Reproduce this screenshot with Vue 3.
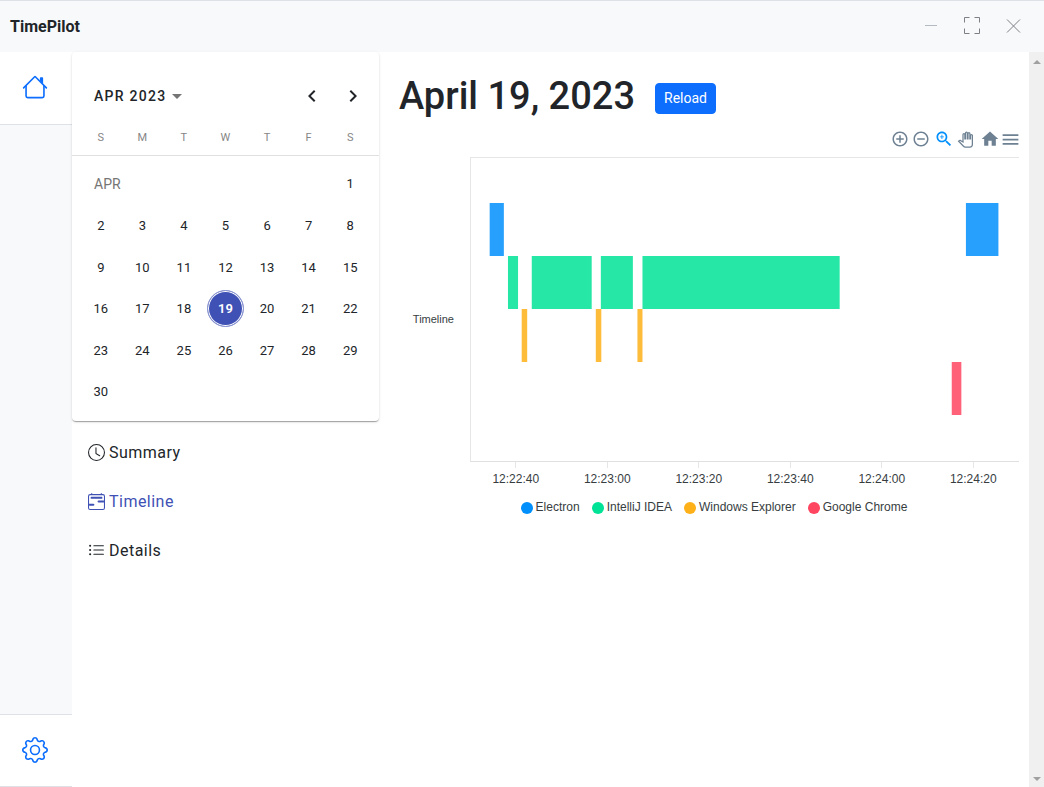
<template>
  <div class="window">
    <header class="titlebar">
      <span class="title">TimePilot</span>
      <div class="window-controls">
        <button type="button" class="minimize" aria-label="Minimize">
          <svg width="20" height="20" viewBox="0 0 20 20"><path d="M4 10.5h12" /></svg>
        </button>
        <button type="button" aria-label="Maximize">
          <svg width="20" height="20" viewBox="0 0 20 20">
            <path d="M2.5 7.500V2.500H7.500M12.500 2.500H17.500V7.500M17.500 13.500V18.500H12.500M7.500 18.500H2.500V13.500" />
          </svg>
        </button>
        <button type="button" aria-label="Close">
          <svg width="20" height="20" viewBox="0 0 20 20"><path d="M4 4.500l13 13M17 4.500l-13 13" /></svg>
        </button>
      </div>
    </header>

    <div class="body">
      <nav class="rail" aria-label="Main">
        <a href="#home" class="rail-item home" aria-label="Home">
          <svg width="26" height="26" viewBox="0 0 16 16">
            <path v-for="d in icons.house" :key="d" fill-rule="evenodd" :d="d" />
          </svg>
        </a>
        <a href="#settings" class="rail-item settings" aria-label="Settings">
          <svg width="26" height="26" viewBox="0 0 16 16">
            <path v-for="d in icons.gear" :key="d" :d="d" />
          </svg>
        </a>
      </nav>

      <aside class="side">
        <section class="calendar">
          <div class="calendar-header">
            <button type="button" class="period">
              APR 2023
              <svg width="10" height="5" viewBox="0 0 10 5"><path d="M0 0l5 5 5-5z" /></svg>
            </button>
            <div class="arrows">
              <button type="button" aria-label="Previous month">
                <svg width="24" height="24" viewBox="0 0 24 24"><path d="M15.410 7.410L14 6l-6 6 6 6 1.410-1.410L10.830 12z" /></svg>
              </button>
              <button type="button" aria-label="Next month">
                <svg width="24" height="24" viewBox="0 0 24 24"><path d="M10 6L8.590 7.410 13.170 12l-4.580 4.590L10 18l6-6z" /></svg>
              </button>
            </div>
          </div>
          <table>
            <thead>
              <tr>
                <th v-for="(day, idx) in weekDays" :key="idx" scope="col">{{ day }}</th>
              </tr>
              <tr aria-hidden="true">
                <th class="divider" colspan="7"></th>
              </tr>
            </thead>
            <tbody>
              <tr v-for="(week, idx) in weeks" :key="idx">
                <td v-if="idx === 0" class="month-label" :colspan="firstDay">APR</td>
                <td v-for="day in week" :key="day">
                  <button type="button" class="day" :class="{ selected: day === selected }" @click="selected = day">
                    <span>{{ day }}</span>
                  </button>
                </td>
              </tr>
            </tbody>
          </table>
        </section>

        <nav class="views" aria-label="Views">
          <a
            v-for="view in views"
            :key="view.name"
            :href="'#' + view.name.toLowerCase()"
            :class="{ active: view.name === 'Timeline' }"
          >
            <svg width="17" height="17" viewBox="0 0 16 16">
              <path v-for="d in view.icon" :key="d" fill-rule="evenodd" :d="d" />
            </svg>
            {{ view.name }}
          </a>
        </nav>
      </aside>

      <main class="content">
        <div class="heading">
          <h1>April {{ selected }}, 2023</h1>
          <button type="button" class="reload">Reload</button>
        </div>

        <div class="toolbar">
          <button v-for="tool in tools" :key="tool.id" type="button" :class="tool.id" :aria-label="tool.label">
            <svg :width="tool.size" :height="tool.size" viewBox="0 0 24 24"><path :d="tool.path" /></svg>
          </button>
        </div>

        <div class="chart">
          <svg class="plot" width="100%" height="336" role="img" aria-label="Timeline">
            <g class="grid">
              <line x1="0" y1="0" x2="100%" y2="0" />
              <line x1="0" y1="0" x2="0" y2="304" />
              <line class="axis" x1="0" y1="304" x2="100%" y2="304" />
            </g>
            <text class="row-label" x="-16" y="166" text-anchor="end">Timeline</text>
            <g v-for="(app, lane) in apps" :key="app.name" :fill="app.color">
              <rect
                v-for="(bar, idx) in app.bars"
                :key="idx"
                :x="percent(bar[0])"
                :y="46 + lane * 53"
                :width="percent(bar[1] - bar[0])"
                height="53"
                fill-opacity="0.85"
              />
            </g>
            <g v-for="(tick, idx) in ticks" :key="tick">
              <line class="tick" :x1="percent(10 + idx * 20)" y1="305" :x2="percent(10 + idx * 20)" y2="311" />
              <text class="tick-label" :x="percent(10 + idx * 20)" y="326" text-anchor="middle">{{ tick }}</text>
            </g>
          </svg>
        </div>

        <ul class="legend">
          <li v-for="app in apps" :key="app.name">
            <svg width="12" height="12" viewBox="0 0 12 12"><circle cx="6" cy="6" r="6" :fill="app.color" /></svg>
            {{ app.name }}
          </li>
        </ul>
      </main>

      <div class="scrollbar" aria-hidden="true">
        <svg width="8" height="4" viewBox="0 0 8 4"><path d="M0 4l4-4 4 4z" /></svg>
        <svg width="8" height="4" viewBox="0 0 8 4"><path d="M0 0l4 4 4-4z" /></svg>
      </div>
    </div>
  </div>
</template>

<script setup>
import { ref } from 'vue';

const selected = ref(19);

const weekDays = ['S', 'M', 'T', 'W', 'T', 'F', 'S'];
const firstDay = 6;
const daysInMonth = 30;

const weeks = [[]];
for (let day = 1; day <= daysInMonth; day++) {
  weeks[weeks.length - 1].push(day);
  if ((firstDay + day) % 7 === 0) weeks.push([]);
}

// Visible range of the chart in seconds, starting at 12:22:30
const range = 120;
const ticks = ['12:22:40', '12:23:00', '12:23:20', '12:23:40', '12:24:00', '12:24:20'];

// Bars are [start, end] in seconds from the start of the range
const apps = [
  { name: 'Electron', color: '#008ffb', bars: [[4.3, 7.4], [108.4, 115.5]] },
  { name: 'IntelliJ IDEA', color: '#00e396', bars: [[8.3, 10.5], [13.5, 26.6], [28.6, 35.6], [37.7, 80.8]] },
  { name: 'Windows Explorer', color: '#feb019', bars: [[11.3, 12.5], [27.5, 28.7], [36.6, 37.7]] },
  { name: 'Google Chrome', color: '#ff4560', bars: [[105.3, 107.4]] },
];

function percent(seconds) {
  return (seconds / range) * 100 + '%';
}

const icons = {
  house: [
    'M2 13.5V7h1v6.5a.5.5 0 0 0 .5.5h9a.5.5 0 0 0 .5-.5V7h1v6.5a1.5 1.5 0 0 1-1.5 1.5h-9A1.5 1.5 0 0 1 2 13.5zm11-11V6l-2-2V2.5a.5.5 0 0 1 .5-.5h1a.5.5 0 0 1 .5.5z',
    'M7.293 1.5a1 1 0 0 1 1.414 0l6.647 6.646a.5.5 0 0 1-.708.708L8 2.207 1.354 8.854a.5.5 0 1 1-.708-.708L7.293 1.5z',
  ],
  gear: [
    'M8 4.754a3.246 3.246 0 1 0 0 6.492 3.246 3.246 0 0 0 0-6.492zM5.754 8a2.246 2.246 0 1 1 4.492 0 2.246 2.246 0 0 1-4.492 0z',
    'M9.796 1.343c-.527-1.79-3.065-1.79-3.592 0l-.094.319a.873.873 0 0 1-1.255.52l-.292-.16c-1.64-.892-3.433.902-2.54 2.541l.159.292a.873.873 0 0 1-.52 1.255l-.319.094c-1.79.527-1.79 3.065 0 3.592l.319.094a.873.873 0 0 1 .52 1.255l-.16.292c-.892 1.64.901 3.434 2.541 2.54l.292-.159a.873.873 0 0 1 1.255.52l.094.319c.527 1.79 3.065 1.79 3.592 0l.094-.319a.873.873 0 0 1 1.255-.52l.292.16c1.64.893 3.434-.902 2.54-2.541l-.159-.292a.873.873 0 0 1 .52-1.255l.319-.094c1.79-.527 1.79-3.065 0-3.592l-.319-.094a.873.873 0 0 1-.52-1.255l.16-.292c.893-1.64-.902-3.433-2.541-2.54l-.292.159a.873.873 0 0 1-1.255-.52l-.094-.319zm-2.633.283c.246-.835 1.428-.835 1.674 0l.094.319a1.873 1.873 0 0 0 2.693 1.115l.291-.16c.764-.415 1.6.42 1.184 1.185l-.159.292a1.873 1.873 0 0 0 1.116 2.692l.318.094c.835.246.835 1.428 0 1.674l-.319.094a1.873 1.873 0 0 0-1.115 2.693l.16.291c.415.764-.42 1.6-1.185 1.184l-.291-.159a1.873 1.873 0 0 0-2.693 1.116l-.094.318c-.246.835-1.428.835-1.674 0l-.094-.319a1.873 1.873 0 0 0-2.692-1.115l-.292.16c-.764.415-1.6-.42-1.184-1.185l.159-.291A1.873 1.873 0 0 0 1.945 8.93l-.319-.094c-.835-.246-.835-1.428 0-1.674l.319-.094A1.873 1.873 0 0 0 3.06 4.377l-.16-.292c-.415-.764.42-1.6 1.185-1.184l.292.159a1.873 1.873 0 0 0 2.692-1.115l.094-.319z',
  ],
};

const views = [
  {
    name: 'Summary',
    icon: [
      'M8 3.5a.5.5 0 0 0-1 0V9a.5.5 0 0 0 .252.434l3.5 2a.5.5 0 0 0 .496-.868L8 8.71V3.5z',
      'M8 16A8 8 0 1 0 8 0a8 8 0 0 0 0 16zm7-8A7 7 0 1 1 1 8a7 7 0 0 1 14 0z',
    ],
  },
  {
    name: 'Timeline',
    icon: [
      'M3.5 0a.5.5 0 0 1 .5.5V1h8V.5a.5.5 0 0 1 1 0V1h1a2 2 0 0 1 2 2v11a2 2 0 0 1-2 2H2a2 2 0 0 1-2-2V3a2 2 0 0 1 2-2h1V.5a.5.5 0 0 1 .5-.5zM2 2a1 1 0 0 0-1 1v11a1 1 0 0 0 1 1h12a1 1 0 0 0 1-1V3a1 1 0 0 0-1-1H2z',
      'M2.5 4a.5.5 0 0 1 .5-.5h10a.5.5 0 0 1 .5.5v1a.5.5 0 0 1-.5.5H3a.5.5 0 0 1-.5-.5V4zM9 8a1 1 0 0 1 1-1h5v2h-5a1 1 0 0 1-1-1zm-8 2h4a1 1 0 1 1 0 2H1v-2z',
    ],
  },
  {
    name: 'Details',
    icon: [
      'M5 11.5a.5.5 0 0 1 .5-.5h9a.5.5 0 0 1 0 1h-9a.5.5 0 0 1-.5-.5zm0-4a.5.5 0 0 1 .5-.5h9a.5.5 0 0 1 0 1h-9a.5.5 0 0 1-.5-.5zm0-4a.5.5 0 0 1 .5-.5h9a.5.5 0 0 1 0 1h-9a.5.5 0 0 1-.5-.5z',
      'M2 4.500a1 1 0 1 0 0-2 1 1 0 0 0 0 2zm0 4a1 1 0 1 0 0-2 1 1 0 0 0 0 2zm0 4a1 1 0 1 0 0-2 1 1 0 0 0 0 2z',
    ],
  },
];

const tools = [
  { id: 'zoom-in', label: 'Zoom in', size: 18, path: 'M13 7h-2v4H7v2h4v4h2v-4h4v-2h-4V7zm-1-5C6.48 2 2 6.48 2 12s4.48 10 10 10 10-4.48 10-10S17.52 2 12 2zm0 18c-4.41 0-8-3.59-8-8s3.59-8 8-8 8 3.59 8 8-3.59 8-8 8z' },
  { id: 'zoom-out', label: 'Zoom out', size: 18, path: 'M7 11v2h10v-2H7zm5-9C6.48 2 2 6.48 2 12s4.48 10 10 10 10-4.48 10-10S17.52 2 12 2zm0 18c-4.41 0-8-3.59-8-8s3.59-8 8-8 8 3.59 8 8-3.59 8-8 8z' },
  { id: 'selection', label: 'Selection zoom', size: 20, path: 'M15.5 14h-.79l-.28-.27C15.41 12.59 16 11.11 16 9.5 16 5.91 13.09 3 9.5 3S3 5.91 3 9.5 5.91 16 9.5 16c1.61 0 3.09-.59 4.23-1.57l.27.28v.79l5 4.99L20.49 19l-4.99-5zm-6 0C7.01 14 5 11.99 5 9.5S7.01 5 9.5 5 14 7.01 14 9.5 11.99 14 9.5 14zM12 10h-2v2H9v-2H7V9h2V7h1v2h2v1z' },
  { id: 'pan', label: 'Panning', size: 15, path: 'M23 5.5V20c0 2.2-1.8 4-4 4h-7.3c-1.08 0-2.1-.43-2.85-1.19L1 14.83s1.26-1.23 1.3-1.25c.22-.19.49-.29.79-.29.22 0 .42.06.6.16.04.01 4.31 2.46 4.31 2.46V4c0-.83.67-1.5 1.5-1.5S11 3.17 11 4v7h1V1.5c0-.83.67-1.5 1.5-1.5S15 .67 15 1.5V11h1V2.5c0-.83.67-1.5 1.5-1.5s1.5.67 1.5 1.5V11h1V5.5c0-.83.67-1.5 1.5-1.5s1.5.67 1.5 1.5z' },
  { id: 'reset', label: 'Reset zoom', size: 20, path: 'M10 20v-6h4v6h5v-8h3L12 3 2 12h3v8z' },
  { id: 'menu', label: 'Menu', size: 21, path: 'M3 18h18v-2H3v2zm0-5h18v-2H3v2zm0-7v2h18V6H3z' },
];
</script>

<style>
body { margin: 0; }
</style>

<style scoped>
* { box-sizing: border-box; }
button { padding: 0; border: 0; background: none; font: inherit; color: inherit; cursor: pointer; }
a { color: inherit; text-decoration: none; }
svg { display: block; flex: none; fill: currentColor; }

.window { display: flex; flex-direction: column; min-height: 100vh; background: white; color: #212529; font-family: Roboto, sans-serif; }

.titlebar { display: flex; justify-content: space-between; align-items: center; height: 52px; padding: 0 21px 0 10px; background: #f8f9fa; border-top: 1px solid #dee2e6; }
.title { font-size: 16px; font-weight: 700; }
.window-controls { display: flex; gap: 21px; padding-bottom: 4px; color: #7c8084; }
.window-controls svg { fill: none; stroke: currentColor; stroke-width: 1; }
.window-controls .minimize { color: #b4babf; }

.body { display: flex; flex: 1; }

.rail { display: flex; flex-direction: column; justify-content: space-between; width: 72px; background: #f8f9fa; color: #0d6efd; }
.rail-item { display: flex; align-items: center; height: 73px; padding: 0 0 2px 22px; background: white; border-bottom: 1px solid #dee2e6; }
.settings { border-top: 1px solid #dee2e6; }

.side { width: 307px; }
.calendar { padding: 26px 8px 8px; border-radius: 4px; background: white; box-shadow: 0 2px 1px -1px rgba(0, 0, 0, 0.2), 0 1px 1px rgba(0, 0, 0, 0.14), 0 1px 3px rgba(0, 0, 0, 0.12); }
.calendar-header { display: flex; justify-content: space-between; align-items: center; margin-bottom: 8px; padding-left: 14px; }
.period { display: flex; align-items: center; gap: 6px; font-size: 14px; font-weight: 500; letter-spacing: 0.09em; }
.period svg { color: #757575; }
.arrows { display: flex; margin-right: -2px; }
.arrows button { display: flex; align-items: center; justify-content: center; width: 41px; height: 36px; }

table { width: 100%; table-layout: fixed; border-collapse: collapse; }
th { height: 31px; padding: 0; font-size: 11px; font-weight: 400; color: #868686; text-align: center; }
.divider { position: relative; height: 10px; }
.divider::after { content: ''; position: absolute; top: 2px; left: -8px; right: -8px; height: 1px; background: #e0e0e0; }
td { padding: 0; }
.month-label { padding-left: 14px; font-size: 14px; color: #757575; }
.day { display: flex; align-items: center; justify-content: center; width: 100%; aspect-ratio: 1; font-size: 13px; }
.day span { display: flex; align-items: center; justify-content: center; width: 37px; height: 37px; border-radius: 50%; }
.selected span { background: #3f51b5; border: 1px solid #8c97d2; box-shadow: inset 0 0 0 1px white; color: white; font-weight: 600; }

.views { display: flex; flex-direction: column; padding: 7px 16px; }
.views a { display: flex; align-items: center; gap: 4px; height: 49px; font-size: 16px; letter-spacing: 0.03em; }
.views .active { color: #3f51b5; }

.content { flex: 1; min-width: 0; padding: 20px 0 0 20px; }
.heading { display: flex; align-items: center; gap: 20px; }
h1 { margin: 0; font-size: 38px; font-weight: 500; line-height: 48px; }
.reload { margin-top: 5px; padding: 4px 8px; border: 1px solid #0d6efd; border-radius: 4px; background: #0d6efd; color: white; font-size: 14px; line-height: 21px; }

.toolbar { display: flex; justify-content: flex-end; margin: 9px 8px 8px 0; color: #6e8192; }
.toolbar button { display: flex; align-items: center; justify-content: center; width: 21px; height: 20px; }
.toolbar .selection { margin-left: 2px; color: #008ffb; }
.toolbar .pan { margin-left: 1px; }
.toolbar .pan svg { overflow: visible; fill: white; stroke: currentColor; stroke-width: 2; }
.toolbar .reset { margin-left: 3px; }

.chart { padding: 0 10px 0 71px; font-family: "Liberation Sans", Arial, sans-serif; }
.plot { overflow: visible; }
.grid line, .tick { stroke: #e6e6e6; shape-rendering: crispEdges; }
.grid .axis { stroke: #e0e0e0; }
.row-label { font-size: 11px; fill: #373d3f; }
.tick-label { font-size: 12px; fill: #373d3f; }

.legend { display: flex; justify-content: center; gap: 12px; margin: 7px 0 0; padding: 0; list-style: none; font-family: "Liberation Sans", Arial, sans-serif; font-size: 12px; line-height: 15px; color: #373d3f; }
.legend li { display: flex; align-items: center; gap: 3px; }

.scrollbar { display: flex; flex-direction: column; justify-content: space-between; align-items: center; width: 15px; padding: 8px 0 6px; background: #f0f0f0; color: #a0a0a0; }
</style>
